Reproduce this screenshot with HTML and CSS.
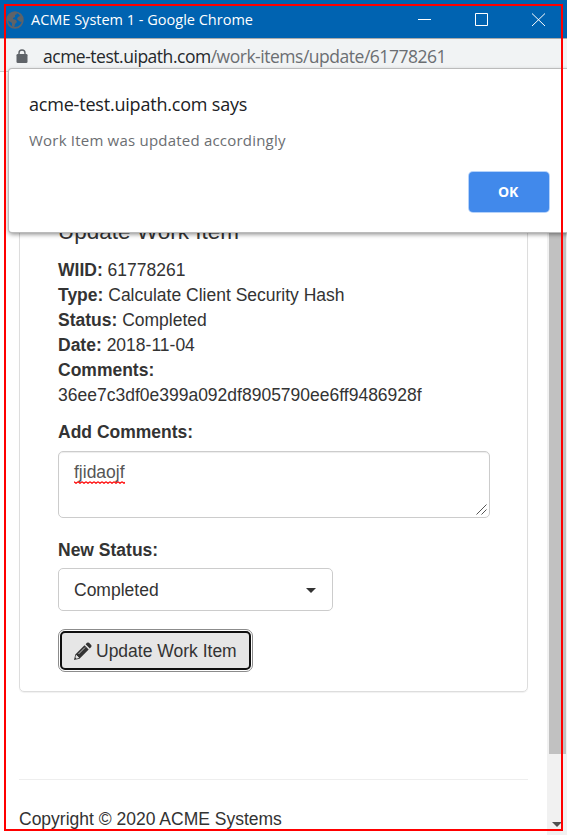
FILE: index.html
```html
<!DOCTYPE html>
<html lang="en">
<head>
<meta charset="utf-8">
<title>ACME System 1</title>
<link rel="stylesheet" href="styles.css">
</head>
<body>
<div class="window">
  <header class="titlebar">
    <svg class="globe" width="18" height="18" viewBox="0 0 18 18"><circle cx="9" cy="9" r="7.8" fill="none" stroke="#5f6368" stroke-width="1.8"/><path d="M2 6 5 2 10 1 11 3 9 4 9 6 7 7 7 8 10 9 11 11 9 13 8 17 6 15 6 12 3 10 1 9ZM12 2 16 6 17 10 15 11 13 10 11 8 12 6 14 5Z" fill="#5f6368"/></svg>
    <span class="title">ACME System 1 - Google Chrome</span>
    <svg class="controls" width="130" height="15" viewBox="0 0 130 15" fill="none" stroke="#fff" stroke-width="1"><path d="M0 7.500H13M57.500 1.500H69.500V13.500H57.500ZM114 1.500 127 14M127 1.500 114 14"/></svg>
  </header>
  <div class="address">
    <svg class="lock" width="12" height="14" viewBox="0 0 12 14"><path d="M3 6V4a3 3 0 0 1 6 0v2" fill="none" stroke="#5f6368" stroke-width="1.4"/><rect x=".5" y="5" width="11" height="9" rx="1.300" fill="#5f6368"/></svg>
    <span class="url"><span class="host">acme-test.uipath.com</span>/work-items/update/61778261</span>
  </div>
  <main class="viewport">
    <div class="page">
      <section class="panel">
        <h1>Update Work Item</h1>
        <p class="details"><b>WIID:</b> 61778261<br><b>Type:</b> Calculate Client Security Hash<br><b>Status:</b> Completed<br><b>Date:</b> 2018-11-04<br><b>Comments:</b><br>36ee7c3df0e399a092df8905790ee6ff9486928f</p>
        <div class="label">Add Comments:</div>
        <div class="textarea"><span class="misspelt">fjidaojf<svg class="squiggle" width="51" height="3" viewBox="0 0 51 3"><defs><pattern id="wave" width="4" height="3" patternUnits="userSpaceOnUse"><path d="M0 .7 2 2.300 4 .7" fill="none" stroke="red" stroke-width="1.200"/></pattern></defs><rect width="51" height="3" fill="url(#wave)"/></svg></span>
          <svg class="grip" width="11" height="11" viewBox="0 0 11 11"><path d="M.5 10.500 10.500.5M5.500 10.500 10.500 5.500" stroke="#555"/></svg>
        </div>
        <div class="label status-label">New Status:</div>
        <div class="select"><span>Completed</span><i class="caret"></i></div>
        <button class="update"><svg width="18" height="18" viewBox="0 0 18 18"><path d="M0 18 1.300 12.500 10.500 3.300 14.700 7.500 5.500 16.700ZM11.600 2.200 13 .8Q14 0 15 .8L17.200 3Q18 4 17.200 5L15.800 6.400Z" fill="#333"/><path d="M2.300 13.300 4.700 15.700 2.500 16.200 1.800 15.500ZM4.500 12 11 5.500" fill="#e6e6e6" stroke="#e6e6e6" stroke-width=".8"/></svg><span>Update Work Item</span></button>
      </section>
      <footer>Copyright © 2020 ACME Systems</footer>
    </div>
    <div class="scrollbar"><div class="thumb"></div><i class="down"></i></div>
  </main>
  <div class="dialog">
    <div class="dialog-title">acme-test.uipath.com says</div>
    <div class="dialog-text">Work Item was updated accordingly</div>
    <button class="ok">OK</button>
  </div>
  <div class="outline"></div>
</div>
</body>
</html>
```
FILE: styles.css
```css
* { box-sizing: border-box; }
body { margin: 0; background: #fff; }
.window { position: relative; width: 567px; height: 835px; overflow: hidden; display: flex; flex-direction: column; font: 17.5px/25px "Liberation Sans", Arial, sans-serif; color: #333; }
.titlebar { height: 38px; flex: none; display: flex; align-items: center; padding: 1px 0 0 6px; background: #0063b1; color: #fff; }
.globe { flex: none; }
.title { width: 387px; flex: none; padding-left: 7px; font: 14.5px/20px "Open Sans", sans-serif; letter-spacing: 0; white-space: nowrap; }
.controls { margin-left: 7px; flex: none; }
.address { height: 34px; flex: none; display: flex; align-items: center; padding: 1px 0 0 16px; background: #f1f3f4; border-top: 1px solid #aaa; border-bottom: 1px solid #ccc; }
.url { margin-left: 15px; font: 17.5px/24px "Open Sans", sans-serif; letter-spacing: -.48px; color: #6b6e72; white-space: nowrap; }
.host { color: #25282b; }
.viewport { flex: 1; min-height: 0; display: flex; }
.page { width: 547px; padding: 69px 19px 0; }
.panel { height: 551px; padding: 76px 37px 0 38px; border: 1px solid #ddd; border-radius: 5px; box-shadow: 0 1px 1px rgba(0,0,0,.06); }
h1 { margin: 0 0 13px; font-size: 22.5px; line-height: 27px; font-weight: 400; }
.details { margin: 0; white-space: nowrap; }
.label { margin-top: 12px; font-weight: 700; }
.textarea { position: relative; height: 67px; margin-top: 6px; padding: 8px 15px; border: 1px solid #ccc; border-radius: 5px; box-shadow: inset 0 1px 1px rgba(0,0,0,.075); color: #555; }
.misspelt { position: relative; }
.squiggle { position: absolute; left: 0; bottom: -2px; }
.grip { position: absolute; right: 2px; bottom: 2px; }
.status-label { margin-top: 20px; }
.select { width: 275px; height: 43px; margin-top: 5px; padding: 1px 16px 0 15px; display: flex; align-items: center; justify-content: space-between; border: 1px solid #ccc; border-radius: 5px; }
.caret { border: 5px solid transparent; border-top-color: #333; border-bottom: 0; }
.update { width: 191px; height: 39px; margin: 20px 0 0 2px; padding: 1px 0 0 12px; display: flex; align-items: center; gap: 4px; font: inherit; color: #333; background: #e6e6e6; border: 2px solid #101010; border-radius: 5px; outline: 1px solid #8c8c8c; outline-offset: 1px; white-space: nowrap; }
footer { margin-top: 87px; padding-top: 27px; border-top: 1px solid #eee; }
.scrollbar { position: relative; width: 20px; padding: 0 1px 0 2px; background: #f1f1f1; }
.thumb { height: 682px; background: #c1c1c1; }
.down { position: absolute; left: 5px; top: 750px; border: 5px solid transparent; border-top-color: #505050; border-bottom: 0; }
.dialog { position: absolute; left: 9px; top: 69px; width: 562px; height: 163px; padding: 23px 20px; background: #fff; border-radius: 3px; box-shadow: 0 0 0 1px #bbb, 0 2px 5px rgba(0,0,0,.5); font-family: "Open Sans", sans-serif; white-space: nowrap; }
.dialog-title { font-size: 18px; line-height: 25px; letter-spacing: -.2px; color: #202124; }
.dialog-text { margin-top: 12px; font-size: 15px; line-height: 22px; letter-spacing: .21px; color: #6b6e72; }
.ok { display: block; width: 80px; height: 40px; margin: 21px 0 0 440px; padding: 0 2px 0 0; border: 0; border-radius: 4px; background: #4189eb; box-shadow: 0 0 0 1px #b5d2fa; font: 700 14px/20px "Open Sans", sans-serif; letter-spacing: -.3px; color: #fff; }
.outline { position: absolute; left: 4px; top: 4px; width: 559px; height: 827px; border: 2px solid #f00; }
```
